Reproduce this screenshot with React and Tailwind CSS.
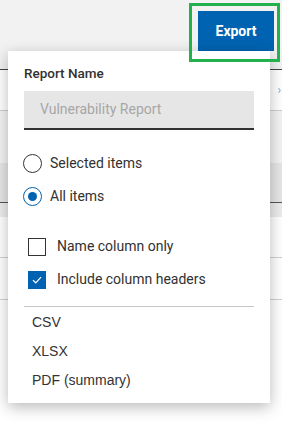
import React from 'react';

const roboto = { fontFamily: 'Roboto, "Liberation Sans", sans-serif' };

function Radio({ checked, label }) {
  return (
    <div className="flex h-[33px] items-center">
      <span
        className={
          'ml-[15px] flex h-[19px] w-[19px] items-center justify-center rounded-full border ' +
          (checked ? 'border-[#0063b1]' : 'border-[#333]')
        }
      >
        {checked && <span className="h-[9px] w-[9px] rounded-full bg-[#0063b1]" />}
      </span>
      <span className="ml-[8px] text-[14px] text-[#323130]">{label}</span>
    </div>
  );
}

function Check({ checked, label }) {
  return (
    <div className="flex h-[33px] items-center">
      <span
        className={
          'ml-[20px] flex h-[18px] w-[18px] items-center justify-center ' +
          (checked ? 'bg-[#0063b1]' : 'border border-[#333]')
        }
      >
        {checked && (
          <svg width="10" height="8" viewBox="0 0 10 8" fill="none">
            <path d="M1 4.2 L3.8 6.8 L9 1.2" stroke="white" strokeWidth="1.2" />
          </svg>
        )}
      </span>
      <span className="ml-[11px] text-[14px] text-[#323130]">{label}</span>
    </div>
  );
}

export default function App() {
  return (
    <div className="relative h-[425px] w-[282px] overflow-hidden bg-white" style={roboto}>
      {/* page behind the menu */}
      <div className="flex h-[69px] justify-end bg-[#f2f2f2] pr-2 pt-[11px]">
        <button className="h-10 w-[76px] bg-[#0063b1] text-[14px] font-bold text-white">Export</button>
      </div>
      <div className="flex h-[42px] items-center justify-end border-y border-y-[#444] border-b-[#cfcfcf] pr-[1px]">
        <span className="text-[12px] text-[#7aa7d8]">›</span>
      </div>
      <div className="h-[52px] bg-[#f3f3f3]" />
      <div className="h-[40px] border-b border-[#555] bg-[#e6e6e6]" />
      <div className="h-[14px] bg-[#ececec]" />
      <div className="h-[41px] border-b border-[#d0d0d0]" />
      <div className="h-[42px] border-b border-[#d0d0d0]" />

      {/* export menu */}
      <div className="absolute left-2 top-[51px] h-[352px] w-[262px] bg-white pt-3 shadow-[0_4px_14px_rgba(0,0,0,0.28)]">
        <div className="ml-4 h-5 text-[13.5px] font-medium leading-5 text-[#323130]">Report Name</div>
        <div className="mx-4 mt-2 flex h-[39px] items-center border-b-2 border-[#333] bg-[#e6e6e6] pl-4 text-[14px] text-[#a6a6a6]">
          Vulnerability Report
        </div>
        <div className="mt-[17px]">
          <Radio label="Selected items" />
          <Radio checked label="All items" />
        </div>
        <div className="mt-[17px]">
          <Check label="Name column only" />
          <Check checked label="Include column headers" />
        </div>
        <div className="mx-4 mt-[10px] h-px bg-[#c8c8c8]" />
        <div className="mt-px" style={{ fontFamily: '"Liberation Sans", Arial, sans-serif' }}>
          {['CSV', 'XLSX', 'PDF (summary)'].map((t) => (
            <div key={t} className="flex h-[29px] items-center pl-6 text-[14px] text-[#333]">
              {t}
            </div>
          ))}
        </div>
      </div>

      {/* highlight box */}
      <div className="absolute left-[189px] top-[3px] h-[59px] w-[91px] border-[3px] border-[#22b14c]" />
    </div>
  );
}
